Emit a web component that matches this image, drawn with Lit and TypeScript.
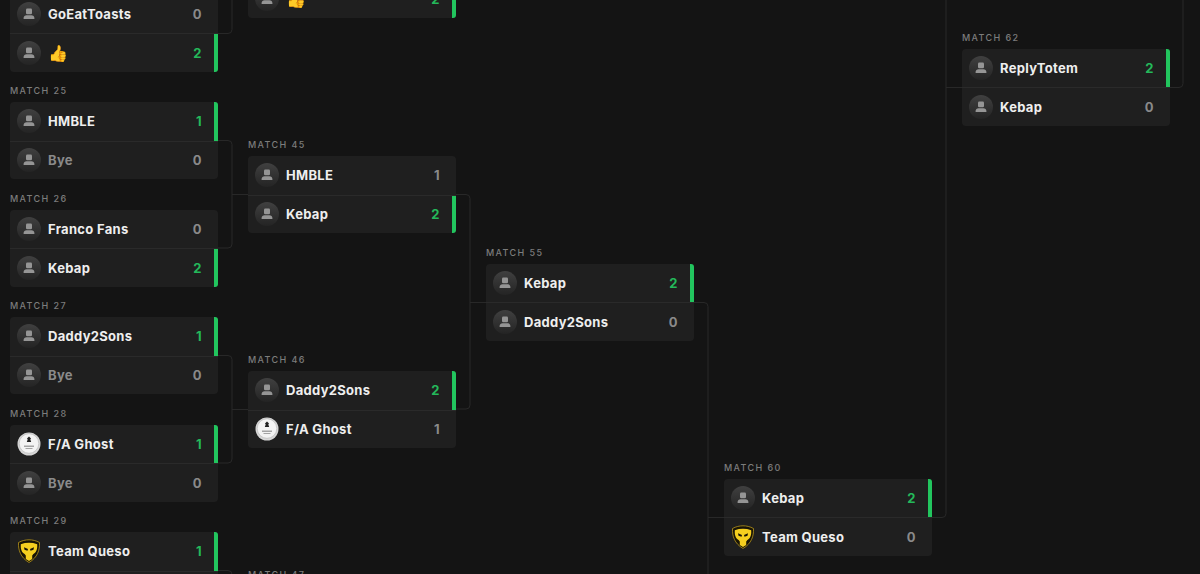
import { LitElement, html, css, svg } from "lit";
import { customElement } from "lit/decorators.js";

type Avatar = "person" | "ghost" | "queso";
interface Team { name: string; score: number; win?: boolean; avatar?: Avatar; dim?: boolean; emoji?: boolean }
interface Match { id: number; x: number; y: number; teams: [Team, Team] }

const P = (name: string, score: number, win = false): Team => ({ name, score, win });
const bye: Team = { name: "Bye", score: 0, dim: true };
const ghost = (score: number, win = false): Team => ({ name: "F/A Ghost", score, win, avatar: "ghost" });
const queso = (score: number, win = false): Team => ({ name: "Team Queso", score, win, avatar: "queso" });
const thumb: Team = { name: "👍", score: 2, win: true, emoji: true };

const matches: Match[] = [
  { id: 24, x: 10, y: -22.5, teams: [P("GoEatToasts", 0), thumb] },
  { id: 25, x: 10, y: 85, teams: [P("HMBLE", 1, true), bye] },
  { id: 26, x: 10, y: 192.5, teams: [P("Franco Fans", 0), P("Kebap", 2, true)] },
  { id: 27, x: 10, y: 300, teams: [P("Daddy2Sons", 1, true), bye] },
  { id: 28, x: 10, y: 407.5, teams: [ghost(1, true), bye] },
  { id: 29, x: 10, y: 515, teams: [queso(1, true), bye] },
  { id: 44, x: 248, y: -76, teams: [P("GoEatToasts", 0), thumb] },
  { id: 45, x: 248, y: 139, teams: [P("HMBLE", 1), P("Kebap", 2, true)] },
  { id: 46, x: 248, y: 354, teams: [P("Daddy2Sons", 2, true), ghost(1)] },
  { id: 47, x: 248, y: 569, teams: [queso(2, true), bye] },
  { id: 55, x: 486, y: 246.5, teams: [P("Kebap", 2, true), P("Daddy2Sons", 0)] },
  { id: 60, x: 724, y: 461.5, teams: [P("Kebap", 2, true), queso(0)] },
  { id: 62, x: 962, y: 31.5, teams: [P("ReplyTotem", 2, true), P("Kebap", 0)] },
];

const lines = [
  "M217 33.5H228a4 4 0 0 0 4-4V-10",
  "M217 140.5H228a4 4 0 0 1 4 4V244a4 4 0 0 1-4 4H217M232 194.5H248",
  "M217 355.5H228a4 4 0 0 1 4 4V459a4 4 0 0 1-4 4H217M232 409.5H248",
  "M217 570.5H228a4 4 0 0 1 4 4V600",
  "M455 194.5H466a4 4 0 0 1 4 4V405a4 4 0 0 1-4 4H455M470 302.5H486",
  "M693 302.5H704a4 4 0 0 1 4 4V600M708 517.5H724",
  "M931 517.5H942a4 4 0 0 0 4-4V-10M946 87.5H962",
  "M1169 87.5H1179a4 4 0 0 0 4-4V-10",
];

const personIcon = svg`<rect x="9" y="6.500" width="6" height="5.800" rx="1.200" fill="#959595"/><path d="M9.500 13.300h5c1.600 0 2.900 1.200 2.900 2.700v1H6.600v-1c0-1.500 1.300-2.700 2.900-2.700Z" fill="#959595"/>`;

@customElement("app-root")
export class AppRoot extends LitElement {
  static styles = css`
    :host { display: block; width: 1200px; height: 574px; position: relative; overflow: hidden; background: #141414; font-family: "Inter", "Noto Sans", sans-serif; }
    .wires { position: absolute; inset: 0; width: 1200px; height: 574px; }
    .wires path { fill: none; stroke: #282828; stroke-width: 1; }
    .match { position: absolute; width: 207.5px; }
    .label { height: 17px; line-height: 11px; font-size: 9px; font-weight: 500; letter-spacing: 1.4px; color: #7c7c7c; white-space: nowrap; }
    .card { border-radius: 4px; background: #1f1f1f; }
    .row { position: relative; display: flex; align-items: center; height: 38.5px; box-sizing: border-box; padding: 0 16px 0 7px; }
    .row + .row { border-top: 1px solid #2a2a2a; }
    .avatar { flex: none; width: 24px; height: 24px; margin-right: 7px; }
    .avatar svg { display: block; }
    .name { flex: 1; font-size: 13px; font-weight: 700; letter-spacing: 0.3px; color: #eeeeee; white-space: nowrap; }
    .name.dim { color: #8a8a8a; }
    .name.emoji { font-size: 16px; letter-spacing: 0; line-height: 1; }
    .score { font-size: 13px; font-weight: 700; color: #8a8a8a; }
    .score.win { color: #24b85a; }
    .bar { position: absolute; right: 0; top: 0; bottom: 0; width: 4px; background: #22c55e; }
    .row:first-child .bar { border-radius: 0 3px 0 0; }
    .row:last-child .bar { border-radius: 0 0 3px 0; }
  `;

  private avatar(t: Team) {
    if (t.avatar === "ghost") {
      return svg`<svg width="24" height="24" viewBox="0 0 24 24"><circle cx="12" cy="12" r="11.500" fill="#d6d6d6"/><circle cx="12" cy="11.500" r="9.800" fill="#f3f3f3" stroke="#b4b4b4" stroke-width=".6"/><path d="M12 4.500l2 2-.7 1 .9 2.500h-4.400l.9-2.500-.7-1z" fill="#222"/><path d="M7 13.500h10v1.500H7zM8.500 16h7v1h-7z" fill="#a4a4a4"/></svg>`;
    }
    if (t.avatar === "queso") {
      return svg`<svg width="24" height="24" viewBox="0 0 24 24"><path d="M12 .800c3.500 0 7 .8 10.500 2.700.4 7.500-2 15-10.500 20C3.500 18.500 1.100 11 1.500 3.500 5 1.600 8.500.800 12 .800Z" fill="#181406" stroke="#b8951c" stroke-width=".8"/><path d="M3.800 5.200c5.300-1.900 11.100-1.900 16.400 0 .3 5-.8 8-3.800 9.800l-1.200 1.500v3.400L12 22l-3.200-2.100v-3.400L7.600 15C4.600 13.200 3.500 10.200 3.800 5.200Z" fill="#f5cf1f"/><path d="M7 8.300l4 1.700-.5 1.800-3-1zM17 8.300L13 10l.5 1.800 3-1z" fill="#181406"/></svg>`;
    }
    return svg`<svg width="24" height="24" viewBox="0 0 24 24"><defs><linearGradient id="av" x1="0" y1="0" x2="0" y2="1"><stop offset="0" stop-color="#404040"/><stop offset="1" stop-color="#242424"/></linearGradient></defs><circle cx="12" cy="12" r="12" fill="url(#av)"/>${personIcon}</svg>`;
  }

  render() {
    return html`
      <svg class="wires" viewBox="0 0 1200 574">${lines.map((d) => svg`<path d="${d}"/>`)}</svg>
      ${matches.map((m) => html`
        <div class="match" style="left:${m.x}px;top:${m.y}px">
          <div class="label">MATCH ${m.id}</div>
          <div class="card">
            ${m.teams.map((t) => html`
              <div class="row">
                <div class="avatar">${this.avatar(t)}</div>
                <div class="name ${t.dim ? "dim" : ""} ${t.emoji ? "emoji" : ""}">${t.name}</div>
                <div class="score ${t.win ? "win" : ""}">${t.score}</div>
                ${t.win ? html`<div class="bar"></div>` : ""}
              </div>`)}
          </div>
        </div>`)}
    `;
  }
}
